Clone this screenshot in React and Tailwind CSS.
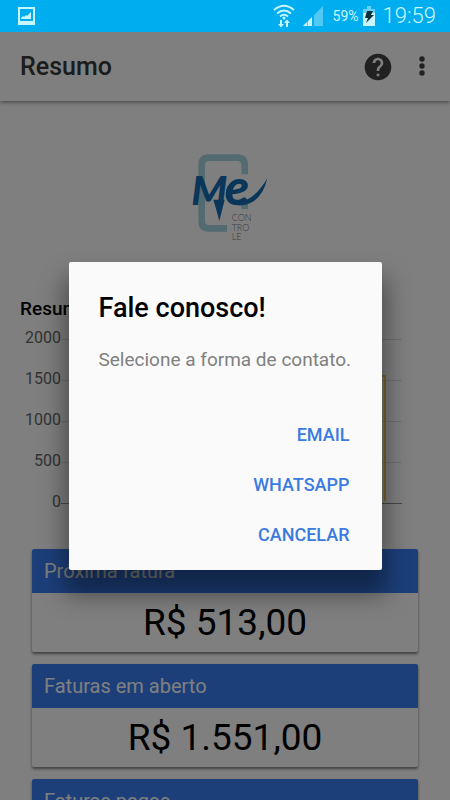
import { useState } from 'react';

const ticks = [2000, 1500, 1000, 500, 0];

const cards = [
  { title: 'Próxima fatura', value: 'R$ 513,00' },
  { title: 'Faturas em aberto', value: 'R$ 1.551,00' },
  { title: 'Faturas pagas', value: 'R$ 2.064,00' },
];

const actions = ['EMAIL', 'WHATSAPP', 'CANCELAR'];

function StatusBar() {
  return (
    <div className="flex h-8 shrink-0 items-center justify-between bg-[#00adef] pl-4 pr-3.5 text-[#c9f5ff]">
      <svg width="20" height="20" viewBox="0 0 20 20" aria-hidden="true">
        <path fill="currentColor" fillRule="evenodd" d="M2 1h17v18H2zM4 3v12h13V3z" />
        <path fill="currentColor" d="M5 13v-1l2-2 1 1 2-2 1 1 4-4v7z" />
      </svg>
      <div className="flex items-center gap-2">
        <svg width="22" height="24" viewBox="0 0 22 24" aria-hidden="true">
          <g fill="none" stroke="currentColor" strokeWidth="2">
            <path d="M1 6q10-8.500 20 0" />
            <path d="M4 9.500q7-6 14 0" />
            <path d="M7 12.500q4-3.500 8 0" />
          </g>
          <circle cx="11" cy="14" r="1.500" fill="currentColor" />
          <path fill="currentColor" d="M7 16h2v4h2l-3 3.500-3-3.500h2zM13 23h2v-4h2l-3-3.500-3 3.500h2z" />
        </svg>
        <svg width="22" height="22" viewBox="0 0 22 22" aria-hidden="true">
          <path fill="currentColor" opacity=".4" d="M20 1v20H11V10zM5 16v5H0z" />
          <path fill="currentColor" d="M0 21l4-4v4zM5 16l4-4v9H5z" />
        </svg>
        <div className="flex items-center gap-1">
          <span className="text-sm leading-5">59%</span>
          <svg width="12" height="20" viewBox="0 0 12 20" aria-hidden="true">
            <path fill="currentColor" opacity=".5" d="M4 0h4v3h4v6H0V3h4z" />
            <path fill="currentColor" d="M0 7h12v13H0z" />
            <path fill="#10303c" d="M4 5h6l-2 4h3l-8 8 2-5H2z" />
          </svg>
        </div>
        <span className="text-[22px] font-light leading-8">19:59</span>
      </div>
    </div>
  );
}

function Logo() {
  return (
    <svg className="mx-auto block" width="110" height="110" viewBox="-30 0 330 330" role="img" aria-label="Me Controle">
      <path
        d="M65 215V72q0-22 22-22h85q22 0 22 22v28M194 186v18M65 200v40q0 22 22 22h54"
        fill="none"
        stroke="#a4d4e0"
        strokeWidth="20"
      />
      <g fill="#146cb4" className="font-['Lato'] font-black italic">
        <text x="34" y="192" className="text-[122px]">M</text>
        <text x="134" y="192" className="text-[150px]">e</text>
      </g>
      {/* brush tails */}
      <path fill="#146cb4" d="M100 176h34l-16 64q-6-24-18-64zM150 184q64 10 112-72-14 62-60 78-30 9-52-6z" />
      <g fill="#777" className="font-['Lato'] text-[27px] font-light">
        <text x="155" y="241">CON</text>
        <text x="155" y="269">TRO</text>
        <text x="155" y="297">LE</text>
      </g>
    </svg>
  );
}

function Chart() {
  return (
    <div className="relative -mt-0.5 h-[204px]">
      {ticks.map((tick) => (
        <div key={tick} className="flex h-[41px] items-center">
          <span className="w-[41px] text-right text-base leading-5 text-[#666]">{tick}</span>
          <div className={tick === 0 ? 'mt-1 mr-7 h-px grow bg-[#909090]' : 'mt-1 mr-7 h-px grow bg-[#e0e0e0]'} />
        </div>
      ))}
      <div className="absolute right-11 top-[58px] h-[126px] w-24 border-2 border-b-0 border-[#f0cc60] bg-[#ffce56]/20" />
    </div>
  );
}

export default function App() {
  const [open, setOpen] = useState(true);

  return (
    <div className="flex h-screen flex-col overflow-hidden bg-white font-['Roboto',sans-serif]">
      <StatusBar />

      <div className="relative flex min-h-0 grow flex-col overflow-hidden">
        <header className="relative flex h-[69px] shrink-0 items-center justify-between bg-white pl-5 pr-3 shadow-[0_1px_4px_rgba(0,0,0,0.5)]">
          <h1 className="text-[25px] font-medium text-[#383838]">Resumo</h1>
          <div className="flex items-center gap-3 text-[#424242]">
            <button type="button" aria-label="Ajuda" onClick={() => setOpen(true)}>
              <svg width="32" height="32" viewBox="0 0 24 24" fill="currentColor">
                <path d="M12 2C6.480 2 2 6.480 2 12s4.480 10 10 10 10-4.480 10-10S17.520 2 12 2zm1 17h-2v-2h2v2zm2.070-7.750l-.9.920C13.450 12.900 13 13.500 13 15h-2v-.5c0-1.100.45-2.100 1.170-2.830l1.240-1.260c.37-.36.590-.86.590-1.410 0-1.100-.9-2-2-2s-2 .9-2 2H8c0-2.210 1.790-4 4-4s4 1.790 4 4c0 .88-.36 1.680-.93 2.250z" />
              </svg>
            </button>
            <button type="button" aria-label="Mais opções">
              <svg width="32" height="32" viewBox="0 0 32 32" fill="currentColor">
                <circle cx="16" cy="8" r="2.700" />
                <circle cx="16" cy="15" r="2.700" />
                <circle cx="16" cy="22" r="2.700" />
              </svg>
            </button>
          </div>
        </header>

        <main className="px-5 pt-10">
          <Logo />
          <h2 className="mt-12 text-[19px] font-medium leading-5 text-black">Resumo das faturas</h2>
          <Chart />
          <div className="mx-3 mt-7 flex flex-col gap-3">
            {cards.map((card) => (
              <section key={card.title} className="shrink-0 rounded-xs bg-white shadow-[0_2px_3px_rgba(0,0,0,0.5)]">
                <h3 className="rounded-t-xs bg-[#387ef5] px-3 py-2 text-xl text-white">{card.title}</h3>
                <p className="py-2 text-center text-[37px] leading-[43px] text-black">{card.value}</p>
              </section>
            ))}
          </div>
        </main>

        {open && (
          <div className="absolute inset-0 flex items-center justify-center bg-black/50">
            <div
              role="dialog"
              aria-labelledby="contact-title"
              className="w-[313px] rounded-xs bg-[#fafafa] pb-2.5 shadow-[0_20px_25px_5px_rgba(0,0,0,0.4)]"
            >
              <h2 id="contact-title" className="px-[30px] pt-7 text-[27px] font-medium leading-9 text-black">
                Fale conosco!
              </h2>
              <p className="px-[30px] pb-9 pt-5 text-[19px] leading-7 text-[#808080]">Selecione a forma de contato.</p>
              <div className="flex flex-col items-end pr-5">
                {actions.map((action) => (
                  <button
                    key={action}
                    type="button"
                    className="h-[50px] px-3 text-lg font-medium text-[#3a7be0]"
                    onClick={() => setOpen(false)}
                  >
                    {action}
                  </button>
                ))}
              </div>
            </div>
          </div>
        )}
      </div>
    </div>
  );
}
